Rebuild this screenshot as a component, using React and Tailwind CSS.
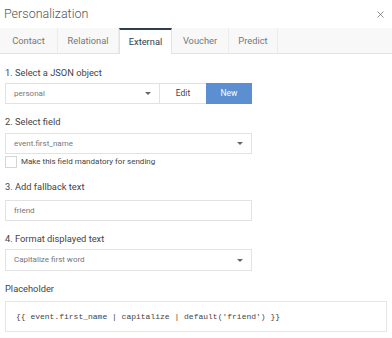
import { X } from "lucide-react";

const tabs = ["Contact", "Relational", "External", "Voucher", "Predict"];
const tabWidths = ["w-[58px]", "w-[61px]", "w-[53px]", "w-[57px]", "w-[49px]"];

function Caret() {
    return (
        <span className="ml-auto mr-[8px] h-0 w-0 border-x-[3px] border-t-[3.5px] border-x-transparent border-t-[#666]" />
    );
}

function Label({ children, className = "" }) {
    return (
        <div className={`h-[16px] text-[9.3px] leading-[16px] text-[#444] ${className}`}>
            {children}
        </div>
    );
}

export default function App() {
    return (
        <div className="h-[338px] w-[392px] bg-white font-['Roboto',sans-serif]">
            {/* Header */}
            <div className="flex h-[28px] items-center pl-[4px] pr-[6px]">
                <h1 className="text-[12.5px] font-light text-[#555]">Personalization</h1>
                <X size={11} strokeWidth={1.4} className="ml-auto text-[#555]" />
            </div>

            {/* Tabs */}
            <div className="flex h-[26px] border-b border-[#e3e3e3] bg-[#f8f8f8]">
                {tabs.map((tab, i) => (
                    <div
                        key={tab}
                        className={`${tabWidths[i]} flex items-center justify-center text-[9.3px] ${
                            tab === "External"
                                ? "-mb-px border-t-2 border-x border-t-[#2c3e50] border-x-[#e3e3e3] bg-white text-[#2c3e50]"
                                : "border-r border-[#ececec] text-[#777]"
                        }`}
                    >
                        {tab}
                    </div>
                ))}
            </div>

            <div className="px-[5px]">
                {/* 1 */}
                <Label className="mt-[11px]">1. Select a JSON object</Label>
                <div className="mt-[2px] flex h-[21px] w-[247px] border border-[#e2e2e2] text-[8px]">
                    <div className="flex w-[153px] items-center pl-[8px] text-[#777]">
                        personal
                        <Caret />
                    </div>
                    <div className="flex w-[47px] items-center justify-center border-l border-[#e2e2e2] text-[8.5px] text-[#444]">
                        Edit
                    </div>
                    <div className="-my-px -mr-px flex flex-1 items-center justify-center bg-[#5b8fd1] text-[8.5px] text-white">
                        New
                    </div>
                </div>

                {/* 2 */}
                <Label className="mt-[10px]">2. Select field</Label>
                <div className="mt-[3px] flex h-[21px] w-[247px] items-center border border-[#e2e2e2] pl-[8px] text-[8px] text-[#777]">
                    event.first_name
                    <Caret />
                </div>
                <div className="mt-[2px] flex items-center gap-[4px]">
                    <span className="h-[12px] w-[12px] border border-[#d6d6d6] bg-white" />
                    <span className="text-[8px] text-[#444]">Make this field mandatory for sending</span>
                </div>

                {/* 3 */}
                <Label className="mt-[11px]">3. Add fallback text</Label>
                <div className="mt-[5px] flex h-[21px] w-[247px] items-center border border-[#e2e2e2] pl-[8px] text-[8px] text-[#777]">
                    friend
                </div>

                {/* 4 */}
                <Label className="mt-[10px]">4. Format displayed text</Label>
                <div className="mt-[2px] flex h-[22px] w-[247px] items-center border border-[#e2e2e2] pl-[8px] text-[8px] text-[#777]">
                    Capitalize first word
                    <Caret />
                </div>

                {/* Placeholder */}
                <Label className="mt-[10px] text-[8.8px]">Placeholder</Label>
                <div className="mt-[4px] flex h-[31px] w-[382px] items-center border border-[#e6e6e6] pl-[10px] font-['Liberation_Mono',monospace] text-[8px] text-[#444]">
                    {"{{ event.first_name | capitalize | default('friend') }}"}
                </div>
            </div>
        </div>
    );
}
